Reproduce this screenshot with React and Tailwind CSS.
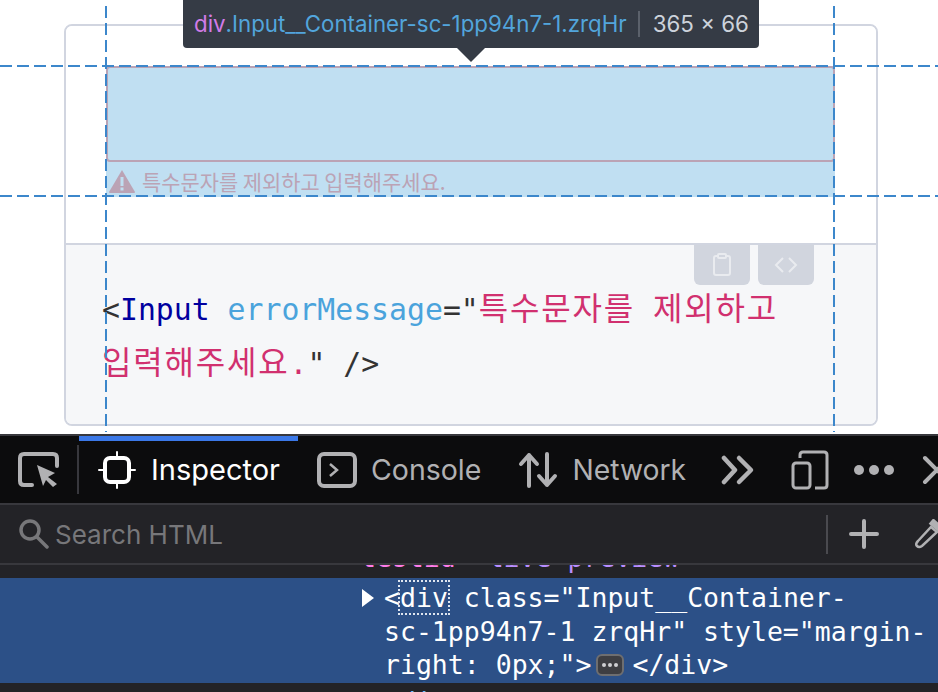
import React from 'react';

const mono = "font-['DejaVu_Sans_Mono','Liberation_Mono',monospace]";
const korean = "font-['Noto_Sans_CJK_KR','Noto_Sans',sans-serif]";
const ui = "font-['Inter','Noto_Sans',sans-serif]";

function Guides() {
    return (
        <>
            <div className="absolute left-0 top-[65px] h-[2px] w-full bg-[repeating-linear-gradient(90deg,#3c87cb_0,#3c87cb_12px,transparent_12px,transparent_17px)]" />
            <div className="absolute left-0 top-[195px] h-[2px] w-full bg-[repeating-linear-gradient(90deg,#3c87cb_0,#3c87cb_12px,transparent_12px,transparent_17px)]" />
            <div className="absolute left-[105px] top-[6px] h-[426px] w-[2px] bg-[repeating-linear-gradient(180deg,#3c87cb_0,#3c87cb_12px,transparent_12px,transparent_17px)]" />
            <div className="absolute left-[833px] top-[6px] h-[426px] w-[2px] bg-[repeating-linear-gradient(180deg,#3c87cb_0,#3c87cb_12px,transparent_12px,transparent_17px)]" />
        </>
    );
}

function Tooltip() {
    return (
        <div className={`absolute left-[183px] top-0 h-[48px] w-[576px] rounded-b-[4px] bg-[#353b45] flex items-center pl-[11px] text-[22.3px] whitespace-nowrap ${ui}`}>
            <span className="text-[#d27be8]">div</span>
            <span className="text-[#52a5dc]">.Input__Container-sc-1pp94n7-1.zrqHr</span>
            <span className="ml-[11px] mr-[13px] h-[26px] w-[2px] bg-[#5b616b]" />
            <span className="text-[#cdd3dc]">365 × 66</span>
            <svg className="absolute left-[273px] top-[47px]" width="30" height="15" viewBox="0 0 30 15">
                <path d="M0 0 L30 0 L15 15 Z" fill="#353b45" />
            </svg>
        </div>
    );
}

function CodeButtons() {
    return (
        <div className="absolute right-[62px] top-0 flex gap-[8px]">
            <button className="flex h-[40px] w-[56px] items-center justify-center rounded-b-[6px] bg-[#d1d5de]">
                <svg width="20" height="24" viewBox="0 0 20 24" fill="none" stroke="#e9ebef" strokeWidth="2">
                    <rect x="2" y="3" width="16" height="19" rx="2" />
                    <rect x="6" y="1" width="8" height="4" rx="1" fill="#d1d5de" />
                </svg>
            </button>
            <button className="flex h-[40px] w-[56px] items-center justify-center rounded-b-[6px] bg-[#d1d5de]">
                <svg width="24" height="16" viewBox="0 0 24 16" fill="none" stroke="#e9ebef" strokeWidth="2">
                    <path d="M9 1 L2 8 L9 15" />
                    <path d="M15 1 L22 8 L15 15" />
                </svg>
            </button>
        </div>
    );
}

function Preview() {
    return (
        <div className="flex h-[402px] flex-col rounded-[8px] border-2 border-[#d1d5e0] overflow-hidden">
            <div className="h-[217px] bg-white pl-[40px] pr-[41px] pt-[40px]">
                <div className="h-[131px] bg-[#c0dff2]">
                    <div className="h-[96px] rounded-[4px] border-2 border-[#bba3b5]" />
                    <div className={`mt-[5px] flex items-center gap-[6px] text-[20.9px] leading-[28px] text-[#bba3b5] ${korean}`}>
                        <svg width="28" height="24" viewBox="0 0 28 24" className="ml-[2px]">
                            <path d="M14 1 L27 23 Q27 24 26 24 L2 24 Q1 24 1 23 Z" fill="#bba3b5" />
                            <rect x="12.5" y="8" width="3" height="9" fill="#c0dff2" />
                            <rect x="12.5" y="18.5" width="3" height="3" fill="#c0dff2" />
                        </svg>
                        <span>특수문자를 제외하고 입력해주세요.</span>
                    </div>
                </div>
            </div>
            <div className={`relative flex-1 border-t-2 border-[#d1d5e0] bg-[#f6f7f9] pl-[36px] pt-[38px] text-[29.8px] leading-[54px] text-[#333] ${mono}`}>
                <CodeButtons />
                <div className="whitespace-nowrap">
                    <span>&lt;</span>
                    <span className="text-[#00009f]">Input</span>{' '}
                    <span className="text-[#4aa3dc]">errorMessage</span>
                    <span>="</span>
                    <span className={`text-[32px] leading-none tracking-[1.8px] text-[#d1306f] ${korean}`}>특수문자를</span>{' '}
                    <span className={`text-[32px] leading-none tracking-[1.8px] text-[#d1306f] ${korean}`}>제외하고</span>
                </div>
                <div className="whitespace-nowrap">
                    <span className={`text-[32px] leading-none tracking-[1.8px] text-[#d1306f] ${korean}`}>입력해주세요</span>
                    <span className="text-[#d1306f]">.</span>
                    <span>" /&gt;</span>
                </div>
            </div>
        </div>
    );
}

function PickerIcon() {
    return (
        <svg width="42" height="36" viewBox="0 0 42 36" fill="none" stroke="#b1b1b3" strokeWidth="4" className="ml-[18px] shrink-0">
            <path d="M14 33 L6 33 Q2 33 2 29 L2 6 Q2 2 6 2 L35 2 Q39 2 39 6 L39 14" strokeLinecap="round" />
            <path d="M19 13 L37 21 L30 25 L39 32 L35 35 L28 28 L25 34 Z" fill="#b1b1b3" stroke="none" />
        </svg>
    );
}

function InspectorIcon() {
    return (
        <svg width="38" height="38" viewBox="0 0 38 38" fill="none" stroke="#fff" strokeLinecap="round" className="shrink-0">
            <rect x="7" y="7" width="24" height="24" rx="5" strokeWidth="4" />
            <path d="M19 1 L19 6 M19 32 L19 37 M1 19 L6 19 M32 19 L37 19" strokeWidth="2" />
        </svg>
    );
}

function ConsoleIcon() {
    return (
        <svg width="40" height="36" viewBox="0 0 40 36" fill="none" stroke="#b1b1b3" className="shrink-0">
            <rect x="2" y="2" width="36" height="32" rx="5" strokeWidth="4" />
            <path d="M13 12 L20 18 L13 24" strokeWidth="2.5" />
        </svg>
    );
}

function NetworkIcon() {
    return (
        <svg width="40" height="36" viewBox="0 0 40 36" fill="none" stroke="#b1b1b3" strokeWidth="4" strokeLinecap="round" strokeLinejoin="round" className="shrink-0">
            <path d="M11 34 L11 3 M3 12 L11 3 L19 12" />
            <path d="M29 2 L29 33 M21 24 L29 33 L37 24" />
        </svg>
    );
}

function Toolbar() {
    return (
        <div className="relative flex h-[67px] shrink-0 items-center overflow-hidden bg-[#0c0c0d]">
            <div className="absolute left-[79px] top-0 h-[5px] w-[219px] bg-[#3b78e7]" />
            <PickerIcon />
            <div className="ml-[17px] h-[49px] w-[2px] shrink-0 bg-[#38383d]" />
            <div className={`ml-[19px] flex shrink-0 items-center gap-[15px] text-[29px] text-white ${ui}`}>
                <InspectorIcon />
                <span>Inspector</span>
            </div>
            <div className={`ml-[37px] flex shrink-0 items-center gap-[14px] text-[28.5px] text-[#b1b1b3] ${ui}`}>
                <ConsoleIcon />
                <span className="pt-[1px]">Console</span>
            </div>
            <div className={`ml-[37px] flex shrink-0 items-center gap-[14px] text-[28.3px] text-[#b1b1b3] ${ui}`}>
                <NetworkIcon />
                <span className="pt-[1px]">Network</span>
            </div>
            <svg width="34" height="32" viewBox="0 0 34 32" fill="none" stroke="#b1b1b3" strokeWidth="4.5" strokeLinecap="round" strokeLinejoin="round" className="ml-[35px] shrink-0">
                <path d="M3 4 L14 16 L3 28" />
                <path d="M18 4 L30 16 L18 28" />
            </svg>
            <svg width="38" height="40" viewBox="0 0 38 40" fill="none" stroke="#b1b1b3" strokeWidth="3" className="ml-[36px] shrink-0">
                <path d="M9 8 L9 5 Q9 2 12 2 L33 2 Q36 2 36 5 L36 35 Q36 38 33 38 L24 38" />
                <rect x="2" y="13" width="17" height="25" rx="3" />
            </svg>
            <div className="ml-[25px] flex shrink-0 gap-[5px]">
                <span className="h-[10px] w-[10px] rounded-full bg-[#b1b1b3]" />
                <span className="h-[10px] w-[10px] rounded-full bg-[#b1b1b3]" />
                <span className="h-[10px] w-[10px] rounded-full bg-[#b1b1b3]" />
            </div>
            <svg width="24" height="28" viewBox="0 0 24 28" fill="none" stroke="#b1b1b3" strokeWidth="4" strokeLinecap="round" className="ml-[29px] shrink-0 overflow-visible">
                <path d="M2 2 L26 26 M26 2 L2 26" />
            </svg>
        </div>
    );
}

function SearchBar() {
    return (
        <div className="flex h-[62px] shrink-0 items-center overflow-hidden border-y-2 border-[#38383d] bg-[#232327]">
            <svg width="30" height="30" viewBox="0 0 30 30" fill="none" stroke="#77777a" strokeWidth="3.5" strokeLinecap="round" className="ml-[19px] shrink-0">
                <circle cx="11" cy="11" r="9" />
                <path d="M18 18 L28 28" />
            </svg>
            <span className={`ml-[6px] text-[26px] text-[#77777a] ${ui}`}>Search HTML</span>
            <div className="ml-auto h-[39px] w-[2px] shrink-0 bg-[#4a4a4f]" />
            <svg width="30" height="30" viewBox="0 0 30 30" stroke="#b1b1b3" strokeWidth="4" strokeLinecap="round" className="ml-[21px] shrink-0">
                <path d="M15 2 L15 28 M2 15 L28 15" />
            </svg>
            <svg width="23" height="30" viewBox="0 0 23 30" fill="none" stroke="#b1b1b3" strokeWidth="2.5" className="ml-[36px] shrink-0">
                <path d="M2 27 Q0 25 3 22 L16 8 L22 13 L7 27 Q4 29 2 27 Z" />
                <path d="M16 2 L30 14" strokeWidth="7" />
            </svg>
        </div>
    );
}

function Markup() {
    return (
        <div className={`flex-1 overflow-hidden bg-[#232327] text-[26.5px] text-white ${mono}`}>
            <div className="flex h-[13px] items-end overflow-hidden pb-[4px] pl-[360px] leading-[33px] whitespace-nowrap">
                <span className="text-[#ff7de9]">testid</span>
                <span className="text-[#ff7de9]">=</span>
                <span className="text-[#b98eff]">"live-preview"</span>
            </div>
            <div className="relative h-[105px] bg-[#2c5087] pl-[384px] pt-[3px] leading-[33.5px]">
                <svg className="absolute left-[362px] top-[11px]" width="12" height="18" viewBox="0 0 12 18">
                    <path d="M0 0 L12 9 L0 18 Z" fill="#fff" />
                </svg>
                <div className="whitespace-nowrap">
                    &lt;<span className="outline-dotted outline-2 outline-[#dfe6f0]">div</span> class="Input__Container-
                </div>
                <div className="whitespace-nowrap">sc-1pp94n7-1 zrqHr" style="margin-</div>
                <div className="flex items-center whitespace-nowrap">
                    <span>right: 0px;"&gt;</span>
                    <span className="ml-[5px] mr-[8px] flex h-[22px] w-[28px] items-center justify-center gap-[2px] rounded-[6px] border-2 border-[#6e6e70] bg-[#3e3e42]">
                        <span className="h-[4px] w-[4px] rounded-full bg-[#cfcfd2]" />
                        <span className="h-[4px] w-[4px] rounded-full bg-[#cfcfd2]" />
                        <span className="h-[4px] w-[4px] rounded-full bg-[#cfcfd2]" />
                    </span>
                    <span>&lt;/div&gt;</span>
                </div>
            </div>
            <div className="pl-[384px] pt-[2px] leading-[33px] text-[#b1b1b3]">
                &lt;<span className="text-[#75bfff]">div</span>&gt;
            </div>
        </div>
    );
}

export default function App() {
    return (
        <div className="relative flex h-[692px] w-[938px] flex-col overflow-hidden bg-white">
            <div className="h-[434px] shrink-0 pl-[64px] pr-[60px] pt-[24px]">
                <Preview />
            </div>
            <div className="flex min-h-0 flex-1 flex-col border-t-2 border-[#38383d]">
                <Toolbar />
                <SearchBar />
                <Markup />
            </div>
            <Guides />
            <Tooltip />
        </div>
    );
}
